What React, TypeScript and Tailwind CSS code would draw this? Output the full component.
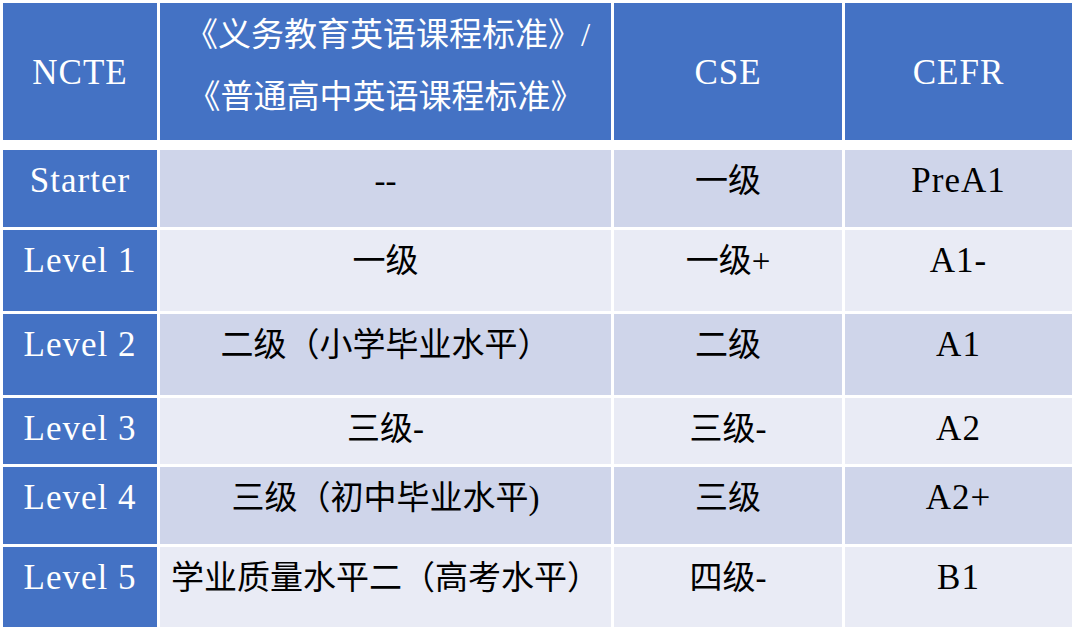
const rows = [
  { level: "Starter", std: "--", cse: "一级", cefr: "PreA1", h: "h-[77px]", bg: "bg-[#cfd5ea]" },
  { level: "Level 1", std: "一级", cse: "一级+", cefr: "A1-", h: "h-[81px]", bg: "bg-[#e9ebf5]" },
  { level: "Level 2", std: "二级（小学毕业水平）", cse: "二级", cefr: "A1", h: "h-[81px]", bg: "bg-[#cfd5ea]" },
  { level: "Level 3", std: "三级-", cse: "三级-", cefr: "A2", h: "h-[66px]", bg: "bg-[#e9ebf5]" },
  { level: "Level 4", std: "三级（初中毕业水平)", cse: "三级", cefr: "A2+", h: "h-[77px]", bg: "bg-[#cfd5ea]" },
  { level: "Level 5", std: "学业质量水平二（高考水平）", cse: "四级-", cefr: "B1", h: "h-[80px]", bg: "bg-[#e9ebf5]" },
];

const latin = "font-['Liberation_Serif','Noto_Sans_CJK_SC',serif] text-[35px] tracking-[1px]";
const cjk = "font-['Liberation_Serif','Noto_Sans_CJK_SC',serif] text-[33px]";

export default function App() {
  return (
    <div className="w-[1080px] h-[632px] bg-white pt-[3px] pl-[3px]">
      <div className="grid grid-cols-[154px_451px_228px_227px] gap-x-[3px] h-[137px] text-white">
        <div className={`bg-[#4472c4] flex items-center justify-center pt-[3px] ${latin}`}>NCTE</div>
        <div className={`bg-[#4472c4] flex flex-col items-center pt-[1px] leading-[62px] ${cjk}`}>
          <span className="pl-[4px]">《义务教育英语课程标准》/</span>
          <span>《普通高中英语课程标准》</span>
        </div>
        <div className={`bg-[#4472c4] flex items-center justify-center pt-[3px] ${latin}`}>CSE</div>
        <div className={`bg-[#4472c4] flex items-center justify-center pt-[3px] ${latin}`}>CEFR</div>
      </div>
      <div className="mt-[10px] flex flex-col gap-y-[3px]">
        {rows.map((r) => (
          <div key={r.level} className={`grid grid-cols-[154px_451px_228px_227px] gap-x-[3px] ${r.h}`}>
            <div className={`bg-[#4472c4] text-white text-center pt-[9px] leading-[44px] ${latin}`}>{r.level}</div>
            <div className={`${r.bg} text-black text-center pt-[9px] leading-[44px] ${cjk}`}>{r.std}</div>
            <div className={`${r.bg} text-black text-center pt-[9px] leading-[44px] ${cjk}`}>{r.cse}</div>
            <div className={`${r.bg} text-black text-center pt-[9px] leading-[44px] ${latin}`}>{r.cefr}</div>
          </div>
        ))}
      </div>
    </div>
  );
}
